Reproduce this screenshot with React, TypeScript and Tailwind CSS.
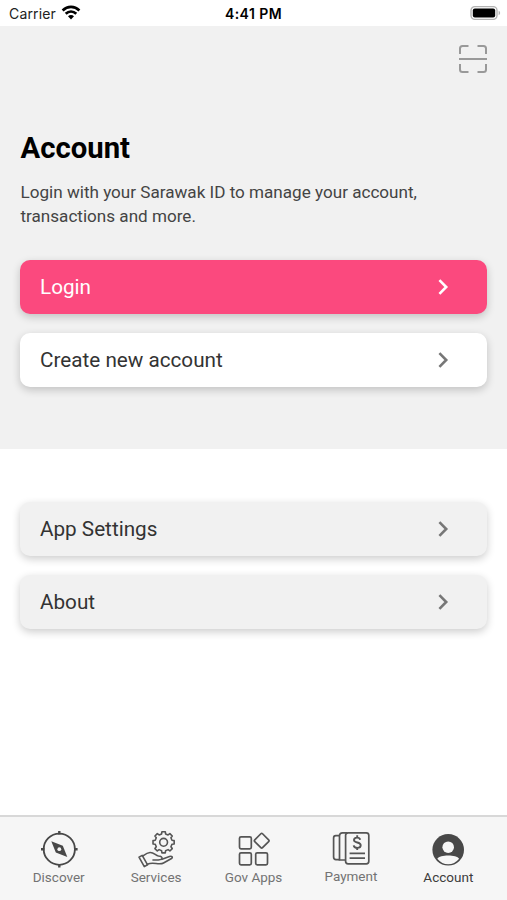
import React from 'react';

const gearPath = (cx: number, cy: number, outer: number, inner: number, teeth: number) => {
    const step = (Math.PI * 2) / teeth;
    const points: string[] = [];
    for (let i = 0; i < teeth; i++) {
        const a = i * step - Math.PI / 2;
        [
            [-0.3, inner],
            [-0.2, outer],
            [0.2, outer],
            [0.3, inner],
        ].forEach(([offset, r]) => {
            points.push(`${(cx + r * Math.cos(a + offset * step)).toFixed(2)} ${(cy + r * Math.sin(a + offset * step)).toFixed(2)}`);
        });
    }
    return `M${points.join('L')}Z`;
};

const WifiIcon = () => (
    <svg width="20" height="16" viewBox="0 0 20 16" fill="none" stroke="#000" strokeWidth="2.7">
        <path d="M1.6 5.4C6.5 .8 13.5 .8 18.4 5.4" />
        <path d="M4.7 8.8C7.8 5.9 12.2 5.9 15.3 8.8" />
        <path d="M7 11.2C8.8 9.7 11.2 9.7 13 11.2L10 14.4Z" fill="#000" stroke="none" />
    </svg>
);

const BatteryIcon = () => (
    <svg width="31" height="16" viewBox="0 0 31 16">
        <rect x="1" y="1.6" width="26" height="12.8" rx="3.8" fill="#fff" stroke="#b3b3b3" strokeWidth="1.4" />
        <rect x="2.8" y="3.4" width="22.4" height="9.2" rx="2" fill="#000" />
        <path d="M28.6 5.8c2 .7 2 3.7 0 4.4z" fill="#b3b3b3" />
    </svg>
);

const ScanIcon = () => (
    <svg width="30" height="30" viewBox="0 0 30 30" fill="none" stroke="#999" strokeWidth="2">
        <path d="M2 10V4.5Q2 2 4.5 2H10.5M19.5 2H25.5Q28 2 28 4.5V10M28 20V25.5Q28 28 25.5 28H19.5M10.5 28H4.5Q2 28 2 25.5V20M1 15H29" />
    </svg>
);

const ChevronIcon = ({ className }: { className: string }) => (
    <svg width="12" height="18" viewBox="0 0 12 18" fill="none" stroke="currentColor" strokeWidth="2.6" className={className}>
        <path d="M2.4 2.2L9.2 9L2.4 15.8" />
    </svg>
);

const DiscoverIcon = () => (
    <svg width="40" height="40" viewBox="0 0 40 40" fill="none" stroke="#484848" strokeWidth="1.8">
        <circle cx="20.3" cy="20.2" r="15.6" />
        <path d="M20.3 2v3.5M20.3 34.9v3.5M2 20.2h3.5M35.1 20.2h3.5" strokeWidth="2.4" />
        <path d="M12.3 12.3L23.8 16.8L28.3 28L16.8 23.6Z" fill="#484848" stroke="none" />
        <circle cx="20.3" cy="20.2" r="1.9" fill="#f6f6f6" stroke="none" />
    </svg>
);

const ServicesIcon = () => (
    <svg width="40" height="40" viewBox="0 0 40 40" fill="none" stroke="#555" strokeWidth="1.6" strokeLinejoin="round" strokeLinecap="round">
        <path d={gearPath(27.6, 13.3, 10.7, 8.6, 8)} />
        <circle cx="27.6" cy="13.3" r="3.9" />
        <path d="M3 28.2L6.2 26.4L11.6 35.8L8.3 37.6Z" />
        <path d="M6.7 27.2C9.5 25 11 23.6 14 23.5C18 23.3 19.5 26.5 22.5 27C25 27.3 26.5 28 26 29.5C25.5 31 21 31.2 17 31" />
        <path d="M26 30.3L33.5 27.5C36 26.7 37.2 28.3 35.5 29.5L27.5 34C24.5 35.7 20 34.2 16.5 34.2C14 34.2 13 34.5 11.3 35.3" />
    </svg>
);

const GovAppsIcon = () => (
    <svg width="40" height="40" viewBox="0 0 40 40" fill="none" stroke="#555" strokeWidth="1.7">
        <rect x="5.5" y="7.8" width="11.8" height="12" rx="1.5" />
        <rect x="5.5" y="23.8" width="11.8" height="12" rx="1.5" />
        <rect x="21.7" y="23.8" width="11.8" height="12" rx="1.5" />
        <rect x="22.2" y="6.2" width="11" height="11" rx="1.2" transform="rotate(45 27.7 11.7)" />
    </svg>
);

const PaymentIcon = () => (
    <svg width="40" height="40" viewBox="0 0 40 40" fill="none" stroke="#555" strokeWidth="1.7">
        <rect x="14.6" y="3.8" width="23.2" height="31" rx="2.5" />
        <path d="M16.5 3.8H11.5Q8.5 3.8 8.5 6.8V31H14.6" />
        <path d="M8 6.6H4.8Q2.6 6.6 2.6 9V28Q2.6 30.6 5 30.6H8.5" />
        <path d="M18.6 24.3H34M18.6 29.2H34" />
        <path d="M29.2 10.8C28.6 7.8 23 7.9 23 11C23 14.5 29.7 12.5 29.7 16.3C29.7 19.7 23.2 19.7 22.7 16.3M26.2 6.3V8.7M26.2 18.6V21" strokeWidth="1.9" />
    </svg>
);

const AccountIcon = () => (
    <svg width="40" height="40" viewBox="0 0 40 40">
        <circle cx="20.2" cy="20.8" r="15.8" fill="#484848" />
        <circle cx="20.2" cy="18.2" r="5.8" fill="#f6f6f6" />
        <path d="M9.3 29.8C11.8 25.5 28.6 25.5 31.1 29.8Q26.5 35.3 20.2 35.3Q13.9 35.3 9.3 29.8Z" fill="#f6f6f6" />
    </svg>
);

const tabs = [
    { name: 'Discover', Icon: DiscoverIcon, labelClass: 'text-[#737373]' },
    { name: 'Services', Icon: ServicesIcon, labelClass: 'text-[#737373]' },
    { name: 'Gov Apps', Icon: GovAppsIcon, labelClass: 'text-[#737373]' },
    { name: 'Payment', Icon: PaymentIcon, labelClass: 'text-[#737373] -mt-px' },
    { name: 'Account', Icon: AccountIcon, labelClass: 'text-[#3c3c3c]' },
];

const MenuButton = ({ label, className, chevron = 'text-[#777]' }: { label: string; className: string; chevron?: string }) => (
    <button
        className={`flex h-[54px] w-full items-center justify-between rounded-[10px] pr-[38px] pl-5 text-[20.7px] shadow-[0_3px_8px_rgba(0,0,0,0.2)] ${className}`}
    >
        <span className="pt-0.5">{label}</span>
        <ChevronIcon className={chevron} />
    </button>
);

const App = () => {
    return (
        <div className="flex h-[900px] w-[507px] flex-col overflow-hidden bg-white font-['Roboto',sans-serif]">
            {/* Status bar */}
            <div className="grid h-[26px] grid-cols-3 items-center pr-1.5 pl-[9px] font-['Inter',sans-serif] text-[14px] text-black">
                <div className="flex items-center gap-[5px]">
                    <span className="tracking-[0.15px] text-[#222]">Carrier</span>
                    <WifiIcon />
                </div>
                <span className="-ml-[3px] text-center font-semibold tracking-[0.45px]">4:41 PM</span>
                <div className="flex justify-end">
                    <BatteryIcon />
                </div>
            </div>

            {/* Login section */}
            <section className="h-[423px] bg-[#f1f1f1] px-5">
                <div className="-mr-px flex justify-end pt-[18px]">
                    <ScanIcon />
                </div>
                <h1 className="mt-[56px] pl-[0.5px] text-[29.3px] leading-[36px] font-bold text-black">Account</h1>
                <p className="mt-[14px] pl-[0.5px] text-[17.1px] leading-[24px] text-[#444]">
                    Login with your Sarawak ID to manage your account,
                    <br />
                    transactions and more.
                </p>
                <div className="mt-8 flex flex-col gap-[19px]">
                    <MenuButton label="Login" className="bg-[#fb497e] text-white" chevron="text-white" />
                    <MenuButton label="Create new account" className="bg-white text-[#333]" />
                </div>
            </section>

            {/* Other menus */}
            <section className="flex flex-1 flex-col gap-[19px] px-5 pt-[53px]">
                <MenuButton label="App Settings" className="bg-[#f1f1f1] text-[#333]" />
                <MenuButton label="About" className="bg-[#f1f1f1] text-[#333]" />
            </section>

            {/* Bottom tabs */}
            <nav className="flex h-[85px] border-t-2 border-[#d8d8d8] bg-[#f6f6f6] px-[10px] pt-3">
                {tabs.map(({ name, Icon, labelClass }) => (
                    <a key={name} className="flex flex-1 flex-col items-center">
                        <Icon />
                        <span className={`text-[13.5px] leading-4 ${labelClass}`}>{name}</span>
                    </a>
                ))}
            </nav>
        </div>
    );
};

export default App;
